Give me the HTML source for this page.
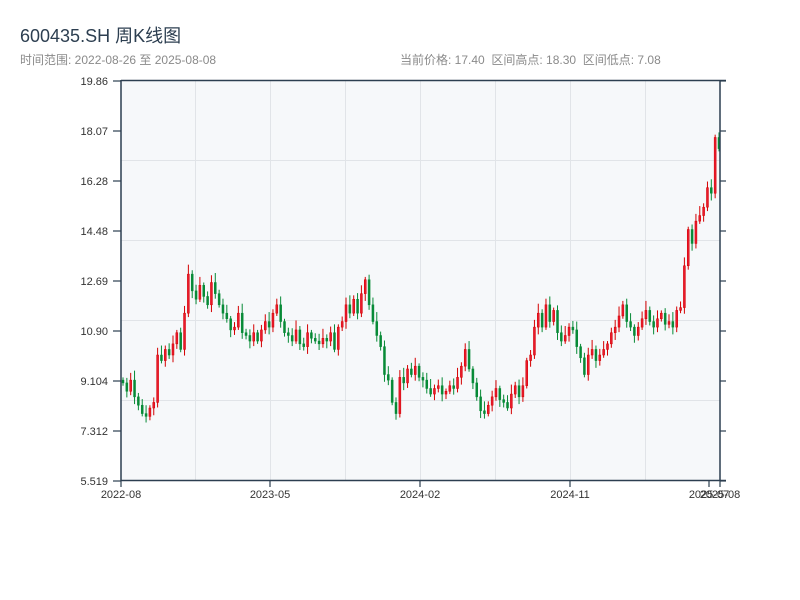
<!DOCTYPE html>
<html><head><meta charset="utf-8"><style>
body{margin:0;background:#fff;width:800px;height:600px;overflow:hidden;font-family:"Liberation Sans","Noto Sans CJK SC",sans-serif}
.t{position:absolute;left:20px;top:22px;font-size:18px;color:#2c3e50}
.s{position:absolute;top:51px;font-size:12px;color:#8a8a8a}
</style></head><body>
<div class="t">600435.SH 周K线图</div>
<div class="s" style="left:20px">时间范围: 2022-08-26 至 2025-08-08</div>
<div class="s" style="left:400px">当前价格: 17.40&nbsp;&nbsp;区间高点: 18.30&nbsp;&nbsp;区间低点: 7.08</div>
<svg id="c" width="800" height="600" style="position:absolute;left:0;top:0" font-family="Liberation Sans, sans-serif" font-size="11" fill="#333">
<rect x="121" y="80" width="599" height="400" fill="#f6f8fa"/>
<g stroke="#e1e4e8" stroke-width="1">
<line x1="195.5" y1="80" x2="195.5" y2="480"/><line x1="270.5" y1="80" x2="270.5" y2="480"/><line x1="345.5" y1="80" x2="345.5" y2="480"/><line x1="420.5" y1="80" x2="420.5" y2="480"/><line x1="495.5" y1="80" x2="495.5" y2="480"/><line x1="570.5" y1="80" x2="570.5" y2="480"/><line x1="645.5" y1="80" x2="645.5" y2="480"/>
<line x1="121" y1="160.5" x2="720" y2="160.5"/><line x1="121" y1="240.5" x2="720" y2="240.5"/><line x1="121" y1="320.5" x2="720" y2="320.5"/><line x1="121" y1="400.5" x2="720" y2="400.5"/>
</g>
<g id="cand"></g>
<g stroke="#2c3e50" stroke-width="1.5" fill="none">
<line x1="121" y1="80.5" x2="726" y2="80.5"/>
<line x1="121" y1="80" x2="121" y2="481"/>
<line x1="720" y1="80" x2="720" y2="481"/>
<line x1="121" y1="480.5" x2="726" y2="480.5"/>
</g>
<g id="ax"></g>
</svg>
<script>
var ns="http://www.w3.org/2000/svg";
function el(t,a,p,txt){var e=document.createElementNS(ns,t);for(var k in a)e.setAttribute(k,a[k]);if(txt)e.textContent=txt;p.appendChild(e);return e;}
function Y(p){return 480-(p-5.519)/(19.86-5.519)*400;}
var ax=document.getElementById('ax');
var labs=["19.86","18.07","16.28","14.48","12.69","10.90","9.104","7.312","5.519"];
for(var i=0;i<9;i++){var y=81+i*50;
el('line',{x1:113,y1:y,x2:121,y2:y,stroke:'#2c3e50','stroke-width':1.2},ax);
el('line',{x1:720,y1:y,x2:726,y2:y,stroke:'#2c3e50','stroke-width':1.2},ax);
el('text',{x:108,y:y+4,'text-anchor':'end',fill:'#333'},ax,labs[i]);}
var xl=[[121,"2022-08"],[270,"2023-05"],[420,"2024-02"],[570,"2024-11"],[709,"2025-07"],[720,"2025-08"]];
xl.forEach(function(a){el('line',{x1:a[0],y1:481,x2:a[0],y2:487,stroke:'#2c3e50','stroke-width':1.2},ax);
el('text',{x:a[0],y:498,'text-anchor':'middle',fill:'#333'},ax,a[1]);});
var c=[9.0,8.7,9.1,8.5,8.2,7.9,7.8,8.1,8.3,10.0,9.8,10.2,10.0,10.4,10.8,10.2,11.5,12.9,12.3,12.0,12.5,12.1,11.8,12.6,12.2,11.8,11.5,11.3,10.9,11.0,11.5,10.8,10.7,10.5,10.8,10.5,10.9,11.2,11.0,11.5,11.8,11.2,10.8,10.7,10.5,10.9,10.4,10.3,10.8,10.6,10.5,10.4,10.6,10.5,10.8,10.2,11.0,11.2,11.8,11.5,12.0,11.5,12.2,12.7,11.8,11.2,10.7,10.3,9.3,9.1,8.3,7.9,9.2,9.0,9.5,9.3,9.6,9.2,9.1,8.8,8.6,8.8,8.9,8.6,8.7,8.9,8.8,9.2,9.6,10.2,9.5,9.0,8.5,8.0,7.9,8.2,8.5,8.8,8.4,8.3,8.1,8.6,8.9,8.5,8.9,9.8,10.0,11.0,11.5,11.0,11.8,11.2,11.6,10.8,10.5,10.7,11.0,10.9,10.3,9.9,9.3,10.0,10.2,9.8,10.0,10.2,10.4,10.8,11.0,11.4,11.8,11.2,11.0,10.7,11.0,11.3,11.6,11.2,11.0,11.3,11.5,11.1,11.2,11.0,11.6,11.7,13.2,14.5,14.0,14.8,15.0,15.3,16.0,15.8,17.8,17.4];
var g=document.getElementById('cand'),n=c.length,prev=9.1;
for(var i=0;i<n;i++){var x=123+i*(596/(n-1));var o=prev,cl=c[i];
var up=cl>=o;var hi=Math.max(o,cl)+0.1+((i*37)%7)*0.04,lo=Math.min(o,cl)-0.1-((i*53)%5)*0.04;
var col=up?'#d40000':'#078a36';
el('line',{x1:x,y1:Y(hi),x2:x,y2:Y(lo),stroke:col,'stroke-width':1},g);
var t=Y(Math.max(o,cl)),b=Y(Math.min(o,cl));if(b-t<1)b=t+1;
el('rect',{x:x-1,y:t,width:2,height:b-t,fill:up?'#e8192c':'#078a36',stroke:col,'stroke-width':0.5},g);
prev=cl;}
</script>
</body></html>
